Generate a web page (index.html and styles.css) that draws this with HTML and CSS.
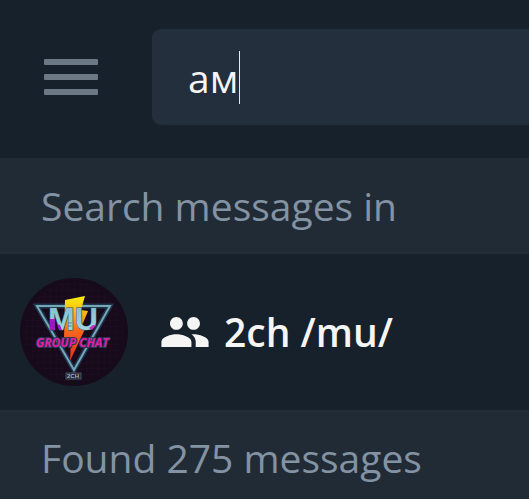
FILE: index.html
```
<!DOCTYPE html>
<html lang="en">
<head>
    <meta charset="UTF-8">
    <meta name="viewport" content="width=device-width, initial-scale=1.0">
    <title>Search messages</title>
    <link rel="stylesheet" href="styles.css">
</head>
<body>
    <header class="top-bar">
        <button type="button" class="menu-button" aria-label="Menu">
            <span class="menu-line"></span>
            <span class="menu-line"></span>
            <span class="menu-line"></span>
        </button>
        <div class="search-box">
            <input type="text" class="search-input" aria-label="Search" value="ам">
            <span class="caret"></span>
        </div>
    </header>

    <main>
        <h2 class="section-title">Search messages in</h2>

        <a href="#" class="chat-row">
            <svg class="avatar" viewBox="0 0 108 108" aria-hidden="true">
                <defs>
                    <linearGradient id="bolt" x1="0" y1="0" x2="0" y2="1">
                        <stop offset="0" stop-color="#f6ee12"/>
                        <stop offset="0.25" stop-color="#fdb813"/>
                        <stop offset="0.55" stop-color="#f9651d"/>
                        <stop offset="1" stop-color="#e8281c"/>
                    </linearGradient>
                    <linearGradient id="chrome" x1="0" y1="0" x2="0" y2="1">
                        <stop offset="0" stop-color="#7fbcca"/>
                        <stop offset="1" stop-color="#a9dde0"/>
                    </linearGradient>
                    <pattern id="grid" width="6" height="6" patternUnits="userSpaceOnUse">
                        <path d="M0 0H6M0 0V6" stroke="#2a1130" stroke-width="1"/>
                    </pattern>
                </defs>
                <circle cx="54" cy="54" r="54" fill="#160a1b"/>
                <circle cx="54" cy="54" r="50" fill="url(#grid)" opacity="0.5"/>
                <!-- triangle with a dim glow under it -->
                <path d="M17 28H90L54 92Z" fill="none" stroke="#24536a" stroke-width="5" opacity="0.6"/>
                <path d="M17 28H90L54 92Z" fill="none" stroke="#74a7b8" stroke-width="2"/>
                <path d="M45 22L65 18L61 32L68 33L61 50L65 51L50 83L51 61L44 60Z" fill="url(#bolt)"/>
                <text x="28" y="52" class="logo-letters" fill="url(#chrome)" stroke="#29475c" stroke-width="1" paint-order="stroke">MU</text>
                <!-- purple foot of the M, with scan lines -->
                <path d="M30 41H35V52H30Z" fill="#a516c4"/>
                <path d="M37 46L40 47L42 52H39Z" fill="#a516c4"/>
                <path d="M30 45H35M30 48H35M48 45H52M48 48H52" stroke="#5d2a8c" stroke-width="1" opacity="0.5"/>
                <path d="M69 50L73 47L76 47L72 52Z" fill="#c32ac5"/>
                <text x="16" y="69" class="logo-script" fill="#e01fa5" stroke="#26375a" stroke-width="2" paint-order="stroke">GROUP CHAT</text>
                <rect x="46" y="95" width="15" height="6" fill="#1b2734" stroke="#465564" stroke-width="1"/>
                <text x="47" y="100" class="logo-tag" fill="#a3b5bd">2CH</text>
            </svg>
            <svg class="group-icon" viewBox="1 5 22 14" aria-hidden="true">
                <path fill="#f5f5f5" d="M16 11c1.66 0 2.99-1.34 2.99-3S17.66 5 16 5s-3 1.34-3 3 1.34 3 3 3zm-8 0c1.66 0 2.99-1.34 2.99-3S9.66 5 8 5 5 6.34 5 8s1.34 3 3 3zm0 2c-2.33 0-7 1.17-7 3.5V19h14v-2.5c0-2.33-4.67-3.5-7-3.5zm8 0c-.29 0-.62.02-.97.05 1.16.84 1.97 1.97 1.97 3.45V19h6v-2.5c0-2.33-4.67-3.5-7-3.5z"/>
            </svg>
            <span class="chat-name">2ch /mu/</span>
        </a>

        <h2 class="section-title">Found 275 messages</h2>
    </main>
</body>
</html>
```
FILE: styles.css
```
* {
    box-sizing: border-box;
}
body {
    margin: 0;
    background-color: #17212b;
    color: #f5f5f5;
    font-family: "Open Sans", "Noto Sans", sans-serif;
    font-size: 39px;
    line-height: 52px;
    overflow-x: hidden;
}

/* Top bar */
.top-bar {
    display: flex;
    align-items: center;
    gap: 54px;
    padding: 29px 0 33px 44px;
}
.menu-button {
    display: flex;
    flex-direction: column;
    gap: 9px;
    width: 54px;
    padding: 0;
    border: none;
    background: none;
    cursor: pointer;
}
.menu-line {
    height: 6px;
    border-radius: 1px;
    background-color: #6c7883;
}
.search-box {
    flex: 1;
    display: flex;
    align-items: center;
    gap: 1px;
    height: 96px;
    padding-left: 36px;
    border-radius: 9px 0 0 9px;
    background-color: #242f3d;
}
.search-input {
    field-sizing: content;
    padding: 2px 0 0;
    border: none;
    outline: none;
    background: none;
    color: #f5f5f5;
    font: inherit;
}
.caret {
    width: 1px;
    height: 53px;
    background-color: #e6e8ea;
}

/* Section headings */
.section-title {
    margin: 0;
    padding: 22px 41px;
    background-color: #202b36;
    color: #8393a3;
    font-size: 39px;
    font-weight: 400;
}

/* Chat result */
.chat-row {
    display: flex;
    align-items: center;
    padding: 24px 20px;
    color: #f5f5f5;
    text-decoration: none;
}
.avatar {
    width: 108px;
    height: 108px;
    margin-right: 33px;
}
.group-icon {
    width: 48px;
    height: 30px;
    margin-right: 15px;
}
.chat-name {
    font-weight: 600;
}

/* Avatar lettering */
.logo-letters {
    font: bold 32px "Liberation Sans", sans-serif;
}
.logo-script {
    font: italic bold 12px "Open Sans", sans-serif;
}
.logo-tag {
    font: bold 6px "Liberation Sans", sans-serif;
}
```
